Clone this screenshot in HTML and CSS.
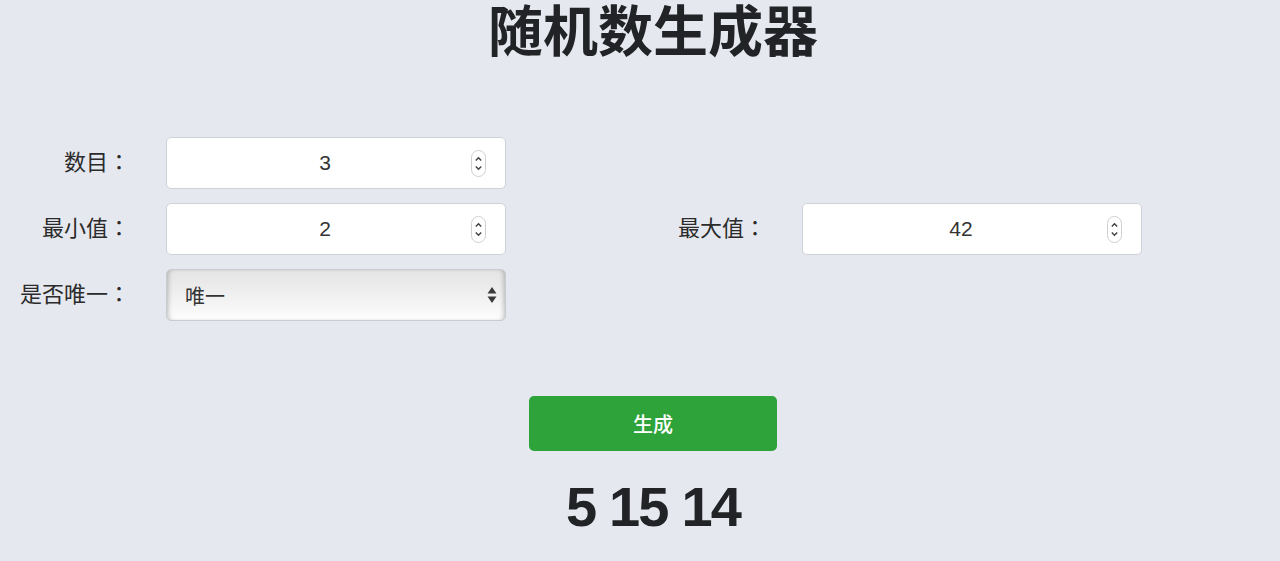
FILE: index.html
```html
<!DOCTYPE html>
<html lang="zh-CN">
<head>
    <meta charset="UTF-8">
    <meta name="viewport" content="width=device-width, initial-scale=1.0">
    <title>随机数生成器</title>
    <link rel="stylesheet" href="styles.css">
</head>
<body>
    <header class="center">
        <h1>随机数生成器</h1>
    </header>
    <form class="settings" id="settings">
        <label class="field-label" for="count">数目<span class="colon">：</span></label>
        <div class="num-box">
            <input type="text" id="count" value="3">
            <svg class="spin" width="15" height="27" viewBox="0 0 15 27"><rect x="0.5" y="0.5" width="14" height="26" rx="7" fill="#fff" stroke="#cfcfcf"/><path d="M4.8 10.5 L7.5 7.8 L10.2 10.5" fill="none" stroke="#444" stroke-width="1.5"/><path d="M4.8 16.5 L7.5 19.2 L10.2 16.5" fill="none" stroke="#444" stroke-width="1.5"/></svg>
        </div>
        <span></span>
        <span></span>

        <label class="field-label" for="min">最小值<span class="colon">：</span></label>
        <div class="num-box">
            <input type="text" id="min" value="2">
            <svg class="spin" width="15" height="27" viewBox="0 0 15 27"><rect x="0.5" y="0.5" width="14" height="26" rx="7" fill="#fff" stroke="#cfcfcf"/><path d="M4.8 10.5 L7.5 7.8 L10.2 10.5" fill="none" stroke="#444" stroke-width="1.5"/><path d="M4.8 16.5 L7.5 19.2 L10.2 16.5" fill="none" stroke="#444" stroke-width="1.5"/></svg>
        </div>
        <label class="field-label" for="max">最大值<span class="colon">：</span></label>
        <div class="num-box">
            <input type="text" id="max" value="42">
            <svg class="spin" width="15" height="27" viewBox="0 0 15 27"><rect x="0.5" y="0.5" width="14" height="26" rx="7" fill="#fff" stroke="#cfcfcf"/><path d="M4.8 10.5 L7.5 7.8 L10.2 10.5" fill="none" stroke="#444" stroke-width="1.5"/><path d="M4.8 16.5 L7.5 19.2 L10.2 16.5" fill="none" stroke="#444" stroke-width="1.5"/></svg>
        </div>

        <label class="field-label" for="unique">是否唯一<span class="colon">：</span></label>
        <div class="select-box">
            <select id="unique">
                <option value="1">唯一</option>
                <option value="0">可重复</option>
            </select>
            <svg class="arrows" width="10" height="20" viewBox="0 0 10 20"><path d="M5 2 L9.5 8.5 L0.5 8.5 Z" fill="#3a3a3a"/><path d="M5 18 L9.5 11.5 L0.5 11.5 Z" fill="#3a3a3a"/></svg>
        </div>
    </form>
    <section class="center">
        <button type="button" class="btn-generate" id="generate">生成</button>
        <div class="result" id="result">5 15 14</div>
    </section>

    <script>
        document.getElementById('generate').addEventListener('click', () => {
            const count = parseInt(document.getElementById('count').value, 10) || 0;
            const min = parseInt(document.getElementById('min').value, 10) || 0;
            const max = parseInt(document.getElementById('max').value, 10) || 0;
            const unique = document.getElementById('unique').value === '1';
            const nums = [];
            let tries = 0;
            while (nums.length < count && tries < 10000) {
                const n = Math.floor(Math.random() * (max - min + 1)) + min;
                tries++;
                if (unique && nums.includes(n)) continue;
                nums.push(n);
            }
            document.getElementById('result').textContent = nums.join(' ');
        });
    </script>
</body>
</html>
```

FILE: styles.css
```css
body {
    margin: 0;
    padding: 0;
    background-color: #e5e8ee;
    color: #222;
    font-family: 'Liberation Sans', 'Noto Sans CJK SC', sans-serif;
}

.center {
    padding-left: 26px;
    text-align: center;
}

h1 {
    margin: 0;
    font-size: 55px;
    line-height: 64px;
    font-weight: 700;
    color: #222326;
}

.settings {
    display: grid;
    grid-template-columns: 130px 340px 224px 340px;
    grid-auto-rows: 52px;
    column-gap: 36px;
    row-gap: 14px;
    margin-top: 73px;
}

.field-label {
    display: flex;
    align-items: center;
    justify-content: flex-end;
    padding-bottom: 6px;
    font-size: 22px;
    color: #2b2b2b;
}

.colon {
    font-family: 'Noto Sans CJK JP', sans-serif;
}

.num-box {
    display: flex;
    align-items: center;
    background: #fff;
    border: 1px solid #cfd3d8;
    border-radius: 5px;
    padding: 0 19px 0 20px;
}

.num-box input {
    flex: 1;
    min-width: 0;
    border: none;
    outline: none;
    background: transparent;
    text-align: center;
    font-family: 'Liberation Sans', sans-serif;
    font-size: 21px;
    color: #333;
    padding: 0;
}

.spin {
    flex: none;
    margin-left: 8px;
}

.select-box {
    position: relative;
}

.select-box select {
    appearance: none;
    -webkit-appearance: none;
    width: 100%;
    height: 100%;
    border: 1px solid #c9ccd1;
    border-radius: 5px;
    padding: 0 18px;
    font-family: 'Noto Sans CJK SC', sans-serif;
    font-size: 20px;
    color: #333;
    background: linear-gradient(to bottom, #e4e4e4 0%, #f1f1f1 55%, #fdfdfd 100%);
    box-shadow: inset 4px 0 5px -3px rgba(0, 0, 0, 0.25), inset -4px 0 5px -3px rgba(0, 0, 0, 0.25);
}

.arrows {
    position: absolute;
    right: 9px;
    top: 16px;
    pointer-events: none;
}

.btn-generate {
    margin-top: 75px;
    width: 248px;
    height: 55px;
    border: none;
    border-radius: 5px;
    background-color: #2ea33a;
    color: #fff;
    font-family: 'Noto Sans CJK SC', sans-serif;
    font-size: 20px;
    font-weight: 500;
    cursor: pointer;
}

.result {
    margin-top: 24px;
    font-size: 56px;
    line-height: 64px;
    font-weight: 700;
    letter-spacing: -1.8px;
    color: #222326;
}
```
